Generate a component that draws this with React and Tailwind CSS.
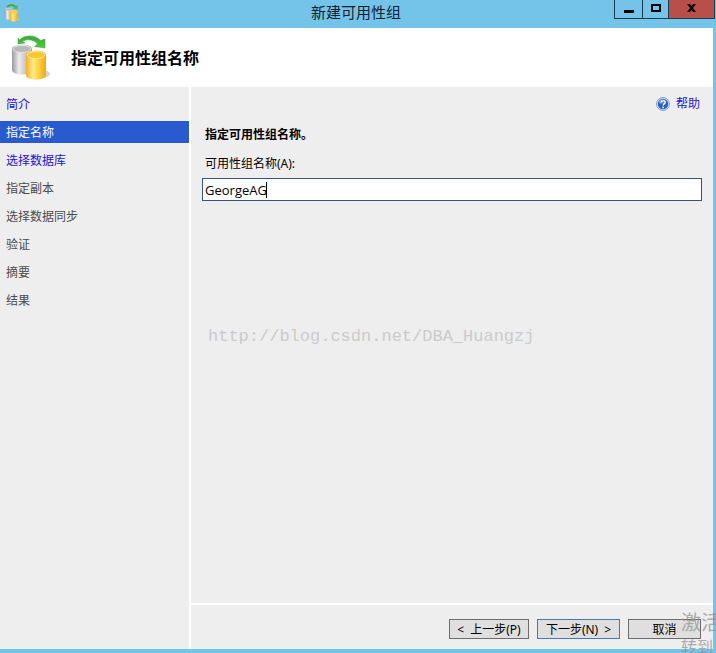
import { useState } from 'react';

const steps = [
  { name: '简介', state: 'visited' },
  { name: '指定名称', state: 'current' },
  { name: '选择数据库', state: 'visited' },
  { name: '指定副本', state: 'pending' },
  { name: '选择数据同步', state: 'pending' },
  { name: '验证', state: 'pending' },
  { name: '摘要', state: 'pending' },
  { name: '结果', state: 'pending' },
];

const stepStyles = {
  visited: 'text-[#2410d8]',
  current: 'bg-[#2a5bce] text-white',
  pending: 'text-[#4c4c4c]',
};

function DatabaseIcon({ className }) {
  return (
    <svg viewBox="0 0 40 46" className={className} aria-hidden="true">
      <defs>
        <linearGradient id="silver" x1="0" x2="1">
          <stop offset="0" stopColor="#9a9a9e" />
          <stop offset="0.35" stopColor="#ececee" />
          <stop offset="1" stopColor="#a0a0a4" />
        </linearGradient>
        <linearGradient id="gold" x1="0" x2="1">
          <stop offset="0" stopColor="#f5b01c" />
          <stop offset="0.35" stopColor="#ffe98c" />
          <stop offset="0.65" stopColor="#fdd03c" />
          <stop offset="1" stopColor="#f0a810" />
        </linearGradient>
        <linearGradient id="green" x1="0" x2="0" y1="0" y2="1">
          <stop offset="0" stopColor="#3aa640" />
          <stop offset="1" stopColor="#4fcc35" />
        </linearGradient>
      </defs>
      <ellipse cx="31" cy="39" rx="8" ry="4" fill="#c9c9cc" opacity="0.8" />
      <path d="M1 14c0-6 20-6 20 0v21c0 6-20 6-20 0z" fill="url(#silver)" />
      <ellipse cx="11" cy="14" rx="9" ry="3.5" fill="#b9b9bc" stroke="#e3e3e5" strokeWidth="1" />
      <path d="M15 20c0-6 20-6 20 0v20c0 6-20 6-20 0z" fill="url(#gold)" />
      <ellipse cx="25" cy="20" rx="9" ry="3.5" fill="#ffc52e" stroke="#ffe791" strokeWidth="1" />
      <path
        d="M7 3 8.500 5C13-.5 25-.5 29.500 5.500L34 4v9l-10.500-1.500 3-2.500C23 4 15 4 11.500 6.500L14 8 7 9z"
        fill="url(#green)"
        stroke="#37a23a"
        strokeWidth="0.5"
      />
    </svg>
  );
}

function HelpIcon() {
  return (
    <svg viewBox="0 0 14 14" className="h-3.5 w-3.5" aria-hidden="true">
      <circle cx="7" cy="7" r="6.400" fill="#dfe8f7" stroke="#6f8fc4" strokeWidth="0.900" />
      <circle cx="7" cy="7" r="5.200" fill="#2c5fc4" />
      <ellipse cx="6" cy="4.500" rx="3.600" ry="2.300" fill="#7ea6ea" opacity="0.7" />
      <path d="M5 5.500C5 3 9.200 3 9.200 5.400 9.200 7 7.100 6.900 7.100 8.500" fill="none" stroke="#fff" strokeWidth="1.400" />
      <circle cx="7.100" cy="10.400" r="0.900" fill="#fff" />
    </svg>
  );
}

function TitleBar() {
  return (
    <header className="relative flex h-7 shrink-0 items-start justify-between bg-[#74c4ea]">
      <DatabaseIcon className="ml-1 mt-1 h-[18px] w-4" />
      <h1 className="absolute inset-x-0 top-0 pr-1 text-center text-[15px] leading-6 text-[#10202c]">新建可用性组</h1>
      <div className="relative mr-px flex h-[19px] border-b border-l border-[#1c3a50]">
        <button aria-label="最小化" className="flex w-7 items-center justify-center border-r border-[#1c3a50]">
          <span className="mt-1 h-[3px] w-2.5 bg-black" />
        </button>
        <button aria-label="最大化" className="flex w-[26px] items-center justify-center border-r border-[#1c3a50]">
          <span className="mb-0.5 h-2 w-2.5 border-2 border-black" />
        </button>
        <button aria-label="关闭" className="flex w-[46px] items-center justify-center border-r border-[#1c3a50] bg-[#b85049]">
          <svg viewBox="0 0 9 8" className="mb-0.5 h-2 w-[9px]" aria-hidden="true">
            <path d="M0 0h3l1.500 2L6 0h3L6 4l3 4H6L4.500 6 3 8H0l3-4z" fill="#100808" />
          </svg>
        </button>
      </div>
    </header>
  );
}

export default function App() {
  const [groupName, setGroupName] = useState('GeorgeAG');

  return (
    <div className="relative flex min-h-screen flex-col overflow-hidden bg-[#74c4ea] pb-1 font-['Noto_Sans','Noto_Sans_CJK_SC',sans-serif] text-xs text-black">
      <TitleBar />

      <div className="mr-[3px] flex h-[59px] shrink-0 items-center gap-5 bg-white pl-[11px]">
        <DatabaseIcon className="h-[46px] w-10" />
        <h2 className="text-base font-bold">指定可用性组名称</h2>
      </div>

      <div className="mr-[3px] flex grow bg-[#eeeeee]">
        <nav className="flex w-[191px] shrink-0 flex-col gap-1.5 border-r-2 border-white pt-1.5">
          {steps.map(step => (
            <a key={step.name} href="#" className={`h-[22px] px-1.5 leading-6 ${stepStyles[step.state]}`}>
              {step.name}
            </a>
          ))}
        </nav>

        <main className="flex min-w-0 grow flex-col">
          <div className="grow px-[11px] pt-2">
            <div className="flex justify-end">
              <a href="#" className="flex items-center gap-1.5 pr-0.5 leading-[18px] text-[#2410d8]">
                <HelpIcon />
                帮助
              </a>
            </div>
            <h3 className="mt-3 pl-[3px] font-bold leading-5">指定可用性组名称。</h3>
            <label htmlFor="group-name" className="mt-[9px] block pl-[3px] leading-5">可用性组名称(A):</label>
            {/* Name box with its text cursor */}
            <div className="relative mt-1">
              <input
                id="group-name"
                value={groupName}
                onChange={e => setGroupName(e.target.value)}
                className="block h-[23px] w-full border border-[#35567c] bg-white px-0.5 font-['Open_Sans',sans-serif] text-[13px] outline-none"
              />
              <span className="absolute left-16 top-1 h-4 w-px bg-black" />
            </div>
            <p className="mt-[124px] pl-1.5 font-['Liberation_Mono',monospace] text-[17px] leading-6 text-[#cbcbcb]">
              http://blog.csdn.net/DBA_Huangzj
            </p>
          </div>

          <footer className="flex h-[46px] shrink-0 items-start justify-end gap-2 border-t-2 border-white pr-3 pt-3.5">
            <button className="flex h-5 w-20 items-end justify-center gap-1.5 border border-[#6c6c6c] bg-[#dfdfdf] leading-4">
              <span>&lt;</span>
              <span>上一步(P)</span>
            </button>
            <button className="flex h-5 w-[83px] items-end justify-center gap-1.5 border border-[#4a78ac] bg-[#dfdfdf] leading-4">
              <span>下一步(N)</span>
              <span>&gt;</span>
            </button>
            <button className="flex h-5 w-[73px] items-end justify-center border border-[#6c6c6c] bg-[#dfdfdf] leading-4">
              取消
            </button>
          </footer>
        </main>
      </div>

      {/* Desktop activation notice showing through at the corner */}
      <div className="pointer-events-none absolute bottom-0 right-0 h-11 w-[35px] overflow-hidden whitespace-nowrap text-[#8c8c8c]/70">
        <p className="text-xl leading-7">激活</p>
        <p className="text-base leading-5">转到</p>
      </div>
    </div>
  );
}
